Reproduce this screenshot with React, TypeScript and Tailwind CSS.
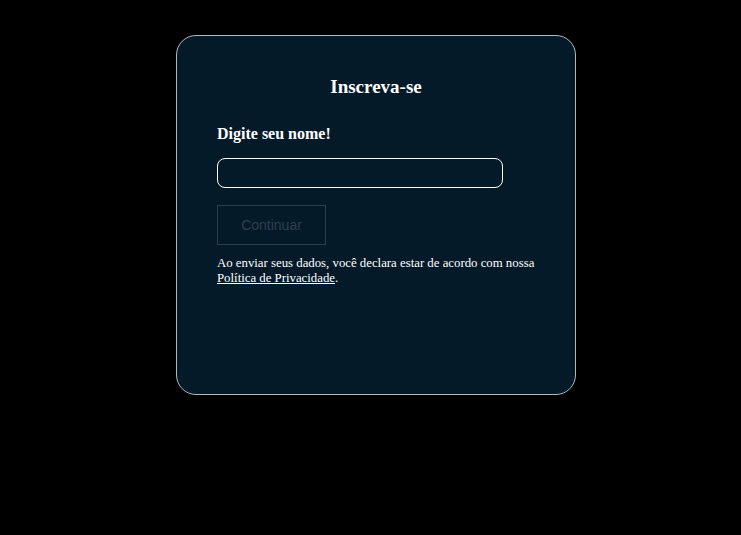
export default function App() {
    return (
        <div className="min-h-[535px] w-full bg-black flex justify-center pl-[11px] pt-[35px] font-['Liberation_Serif',serif]">
            <div className="w-[400px] h-[360px] rounded-[20px] border border-[#b4b8bc] bg-[#051a29] px-10 pt-10 text-white">
                <h2 className="text-center text-[19px] leading-[22px] font-bold">Inscreva-se</h2>
                <label className="block mt-[26px] text-base leading-[20px] font-bold">Digite seu nome!</label>
                <input
                    type="text"
                    className="block mt-[14px] w-[286px] h-[30px] rounded-[8px] border border-white bg-transparent px-2 text-white outline-none"
                />
                <button className="mt-[17px] w-[109px] h-[40px] border border-[#2e3f4c] text-[#2e3f4c] text-sm font-['Liberation_Sans',sans-serif]">
                    Continuar
                </button>
                <p className="mt-[11px] w-[330px] text-[12.8px] leading-[15px]">
                    Ao enviar seus dados, você declara estar de acordo com nossa{' '}
                    <a className="underline">Política de Privacidade</a>.
                </p>
            </div>
        </div>
    );
}
